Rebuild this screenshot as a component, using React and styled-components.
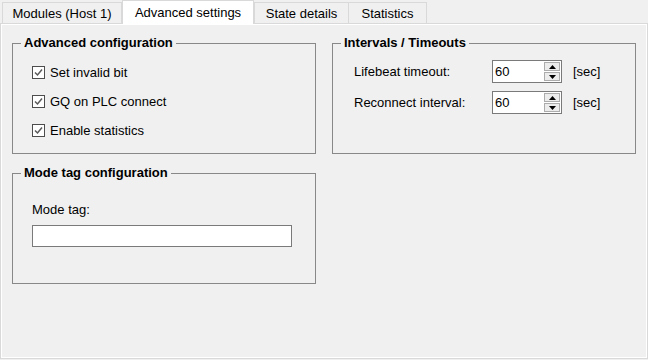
import React from 'react';
import styled, { createGlobalStyle } from 'styled-components';

const GlobalStyle = createGlobalStyle`
  html, body {
    margin: 0;
    padding: 0;
    background: #f0f0f0;
  }
  body {
    font-family: 'Liberation Sans', Arial, sans-serif;
    font-size: 13px;
    color: #000;
  }
`;

const Window = styled.div`
  width: 648px;
  height: 360px;
  display: flex;
  flex-direction: column;
  box-sizing: border-box;
  padding-bottom: 1px;
`;

const TabStrip = styled.div`
  display: flex;
  align-items: flex-end;
  height: 23px;
  padding-left: 2px;
  position: relative;
  z-index: 1;
`;

const Tab = styled.div`
  box-sizing: border-box;
  width: ${({ w }) => w}px;
  height: ${({ active }) => (active ? 24 : 21)}px;
  margin-bottom: ${({ active }) => (active ? -1 : 0)}px;
  display: flex;
  align-items: center;
  justify-content: center;
  background: ${({ active }) => (active ? '#ffffff' : '#f0f0f0')};
  border: 1px solid #d9d9d9;
  border-bottom: none;
  border-left: ${({ joined }) => (joined ? 'none' : '1px solid #d9d9d9')};
  padding-top: ${({ active }) => (active ? 0 : 1)}px;
  white-space: nowrap;
  line-height: 15px;
`;

const Panel = styled.div`
  flex: 1;
  box-sizing: border-box;
  border: 1px solid #d9d9d9;
  box-shadow: inset 1px 1px 0 #ffffff, inset -1px -1px 0 #ffffff;
  background: #f0f0f0;
  display: grid;
  grid-template-columns: 304px 304px;
  grid-auto-rows: 118px;
  column-gap: 16px;
  row-gap: 12px;
  align-content: start;
  padding: 12px 0 0 11px;
`;

const Group = styled.fieldset`
  box-sizing: border-box;
  margin: 0;
  padding: 0;
  min-width: 0;
  height: 118px;
  border: 1px solid #888888;
`;

const Legend = styled.legend`
  font-weight: bold;
  font-size: 13px;
  line-height: 14px;
  padding: 0 3px;
  margin-left: 8px;
`;

const CheckList = styled.div`
  display: flex;
  flex-direction: column;
  gap: 9px;
  padding: 12px 0 0 19px;
`;

const CheckRow = styled.label`
  display: flex;
  align-items: center;
  gap: 5px;
  height: 20px;
  line-height: 15px;
`;

const Box = styled.svg`
  width: 13px;
  height: 13px;
  flex: none;
`;

const FieldGrid = styled.div`
  display: grid;
  grid-template-columns: 138px 70px auto;
  grid-auto-rows: 23px;
  row-gap: 8px;
  align-items: center;
  padding: 10px 0 0 21px;
`;

const FieldLabel = styled.span`
  line-height: 15px;
`;

const Spin = styled.div`
  box-sizing: border-box;
  width: 70px;
  height: 23px;
  border: 1px solid #7a7a7a;
  background: #ffffff;
  display: flex;
  align-items: stretch;
`;

const SpinValue = styled.span`
  flex: 1;
  padding-left: 2px;
  line-height: 21px;
`;

const SpinButtons = styled.div`
  width: 16px;
  display: flex;
  flex-direction: column;
  gap: 1px;
  padding: 1px 1px 1px 0;
`;

const SpinButton = styled.div`
  flex: 1;
  border: 1px solid #acacac;
  background: #ececec;
  display: flex;
  align-items: center;
  justify-content: center;
`;

const Unit = styled.span`
  line-height: 15px;
  padding-left: 11px;
`;

const ModeBody = styled.div`
  display: flex;
  flex-direction: column;
  padding: 22px 0 0 19px;
  gap: 8px;
`;

const ModeLabel = styled.span`
  line-height: 15px;
`;

const TextBox = styled.div`
  box-sizing: border-box;
  width: 260px;
  height: 22px;
  border: 1px solid #7a7a7a;
  background: #ffffff;
`;

function Check({ label }) {
  return (
    <CheckRow>
      <Box viewBox="0 0 13 13">
        <rect x="0.5" y="0.5" width="12" height="12" fill="#ffffff" stroke="#4d4d4d" />
        <polyline points="3,6.5 5.5,9 10,3.5" fill="none" stroke="#5a5a5a" strokeWidth="1.5" />
      </Box>
      {label}
    </CheckRow>
  );
}

function Arrow({ up }) {
  return (
    <svg width="7" height="4" viewBox="0 0 7 4">
      <polygon points={up ? '0,4 7,4 3.5,0' : '0,0 7,0 3.5,4'} fill="#000" />
    </svg>
  );
}

function Spinner({ value }) {
  return (
    <Spin>
      <SpinValue>{value}</SpinValue>
      <SpinButtons>
        <SpinButton><Arrow up /></SpinButton>
        <SpinButton><Arrow /></SpinButton>
      </SpinButtons>
    </Spin>
  );
}

const tabs = [
  { label: 'Modules (Host 1)', w: 120 },
  { label: 'Advanced settings', w: 132, active: true },
  { label: 'State details', w: 95 },
  { label: 'Statistics', w: 78, joined: true },
];

export default function App() {
  return (
    <>
      <GlobalStyle />
      <Window>
        <TabStrip>
          {tabs.map((t) => (
            <Tab key={t.label} w={t.w} active={t.active} joined={t.joined}>
              {t.label}
            </Tab>
          ))}
        </TabStrip>
        <Panel>
          <Group>
            <Legend>Advanced configuration</Legend>
            <CheckList>
              <Check label="Set invalid bit" />
              <Check label="GQ on PLC connect" />
              <Check label="Enable statistics" />
            </CheckList>
          </Group>
          <Group>
            <Legend>Intervals / Timeouts</Legend>
            <FieldGrid>
              <FieldLabel>Lifebeat timeout:</FieldLabel>
              <Spinner value="60" />
              <Unit>[sec]</Unit>
              <FieldLabel>Reconnect interval:</FieldLabel>
              <Spinner value="60" />
              <Unit>[sec]</Unit>
            </FieldGrid>
          </Group>
          <Group>
            <Legend>Mode tag configuration</Legend>
            <ModeBody>
              <ModeLabel>Mode tag:</ModeLabel>
              <TextBox />
            </ModeBody>
          </Group>
        </Panel>
      </Window>
    </>
  );
}
